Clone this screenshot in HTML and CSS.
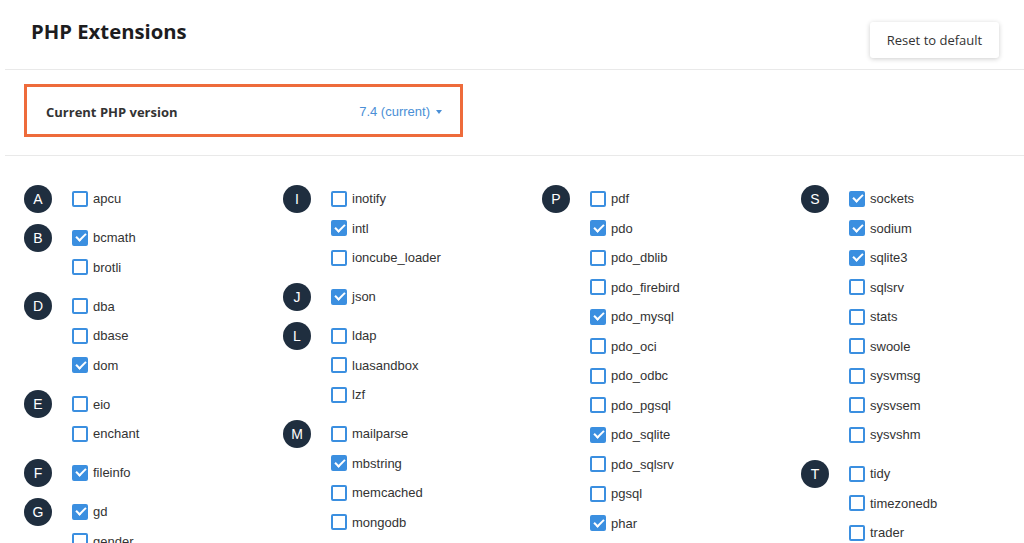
FILE: index.html
```html
<!DOCTYPE html>
<html>
<head>
    <link rel="stylesheet" href="styles.css">
</head>
<body>
<div class="page">
    <div class="header">
        <h1 class="title">PHP Extensions</h1>
        <button class="reset">Reset to default</button>
    </div>

    <div class="version-wrap">
        <div class="version-box">
            <span class="version-label">Current PHP version</span>
            <span class="version-select">7.4 (current) <span class="caret"></span></span>
        </div>
    </div>

    <div class="ext-grid">
        <div class="col">
            <div class="group"><span class="letter">A</span><ul>
                <li><span class="cb"></span>apcu</li>
            </ul></div>
            <div class="group"><span class="letter">B</span><ul>
                <li><span class="cb on"></span>bcmath</li>
                <li><span class="cb"></span>brotli</li>
            </ul></div>
            <div class="group"><span class="letter">D</span><ul>
                <li><span class="cb"></span>dba</li>
                <li><span class="cb"></span>dbase</li>
                <li><span class="cb on"></span>dom</li>
            </ul></div>
            <div class="group"><span class="letter">E</span><ul>
                <li><span class="cb"></span>eio</li>
                <li><span class="cb"></span>enchant</li>
            </ul></div>
            <div class="group"><span class="letter">F</span><ul>
                <li><span class="cb on"></span>fileinfo</li>
            </ul></div>
            <div class="group"><span class="letter">G</span><ul>
                <li><span class="cb on"></span>gd</li>
                <li><span class="cb"></span>gender</li>
            </ul></div>
        </div>

        <div class="col">
            <div class="group"><span class="letter">I</span><ul>
                <li><span class="cb"></span>inotify</li>
                <li><span class="cb on"></span>intl</li>
                <li><span class="cb"></span>ioncube_loader</li>
            </ul></div>
            <div class="group"><span class="letter">J</span><ul>
                <li><span class="cb on"></span>json</li>
            </ul></div>
            <div class="group"><span class="letter">L</span><ul>
                <li><span class="cb"></span>ldap</li>
                <li><span class="cb"></span>luasandbox</li>
                <li><span class="cb"></span>lzf</li>
            </ul></div>
            <div class="group"><span class="letter">M</span><ul>
                <li><span class="cb"></span>mailparse</li>
                <li><span class="cb on"></span>mbstring</li>
                <li><span class="cb"></span>memcached</li>
                <li><span class="cb"></span>mongodb</li>
            </ul></div>
        </div>

        <div class="col">
            <div class="group"><span class="letter">P</span><ul>
                <li><span class="cb"></span>pdf</li>
                <li><span class="cb on"></span>pdo</li>
                <li><span class="cb"></span>pdo_dblib</li>
                <li><span class="cb"></span>pdo_firebird</li>
                <li><span class="cb on"></span>pdo_mysql</li>
                <li><span class="cb"></span>pdo_oci</li>
                <li><span class="cb"></span>pdo_odbc</li>
                <li><span class="cb"></span>pdo_pgsql</li>
                <li><span class="cb on"></span>pdo_sqlite</li>
                <li><span class="cb"></span>pdo_sqlsrv</li>
                <li><span class="cb"></span>pgsql</li>
                <li><span class="cb on"></span>phar</li>
            </ul></div>
        </div>

        <div class="col">
            <div class="group"><span class="letter">S</span><ul>
                <li><span class="cb on"></span>sockets</li>
                <li><span class="cb on"></span>sodium</li>
                <li><span class="cb on"></span>sqlite3</li>
                <li><span class="cb"></span>sqlsrv</li>
                <li><span class="cb"></span>stats</li>
                <li><span class="cb"></span>swoole</li>
                <li><span class="cb"></span>sysvmsg</li>
                <li><span class="cb"></span>sysvsem</li>
                <li><span class="cb"></span>sysvshm</li>
            </ul></div>
            <div class="group"><span class="letter">T</span><ul>
                <li><span class="cb"></span>tidy</li>
                <li><span class="cb"></span>timezonedb</li>
                <li><span class="cb"></span>trader</li>
            </ul></div>
        </div>
    </div>
</div>
</body>
</html>
```

FILE: styles.css
```css
body {
    margin: 0;
    background: #fff;
    font-family: "Liberation Sans", Arial, sans-serif;
    color: #333;
    overflow: hidden;
}
.page {
    margin-left: 5px;
}
.header {
    display: flex;
    justify-content: space-between;
    align-items: flex-start;
    height: 69px;
    border-bottom: 1px solid #e9e9e9;
    padding: 0 25px 0 26px;
}
.title {
    margin: 17px 0 0;
    font-family: "Open Sans", sans-serif;
    font-size: 20.3px;
    line-height: 28px;
    font-weight: 700;
    color: #1d1d1f;
}
.reset {
    margin-top: 22px;
    width: 129px;
    height: 36px;
    border: none;
    border-radius: 3px;
    background: #fff;
    box-shadow: 0 1px 5px rgba(0, 0, 0, 0.2);
    font-family: "Open Sans", sans-serif;
    font-size: 13px;
    color: #333;
    cursor: pointer;
}
.version-wrap {
    padding: 14px 0 18px 19px;
    border-bottom: 1px solid #e9e9e9;
}
.version-box {
    width: 439px;
    height: 53px;
    box-sizing: border-box;
    border: 3px solid #ee6b3b;
    display: flex;
    align-items: center;
    justify-content: space-between;
    padding: 2px 18px 0 19px;
}
.version-label {
    font-family: "Open Sans", sans-serif;
    font-weight: 700;
    font-size: 13px;
    color: #333;
}
.version-select {
    color: #4a8fd6;
    font-size: 13px;
    display: flex;
    align-items: center;
}
.caret {
    display: inline-block;
    margin-left: 6px;
    width: 0;
    height: 0;
    border-left: 3.5px solid transparent;
    border-right: 3.5px solid transparent;
    border-top: 4px solid #4a8fd6;
}
.ext-grid {
    display: grid;
    grid-template-columns: repeat(4, 259px);
    padding: 28px 0 0 19px;
}
.group {
    display: flex;
    align-items: flex-start;
    margin-bottom: 9.5px;
}
.letter {
    flex: none;
    width: 28px;
    height: 28px;
    margin-top: 0.75px;
    border-radius: 50%;
    background: #1f2e3f;
    color: #fff;
    font-size: 14px;
    line-height: 28px;
    text-align: center;
}
.group ul {
    list-style: none;
    margin: 0 0 0 20px;
    padding: 0;
}
.group li {
    height: 29.5px;
    display: flex;
    align-items: center;
    font-size: 13px;
    color: #333;
}
.cb {
    width: 16px;
    height: 16px;
    box-sizing: border-box;
    border: 2px solid #3b8fe0;
    border-radius: 2px;
    margin-right: 5px;
    background: #fff;
    position: relative;
}
.cb.on {
    background: #3b8fe0;
}
.cb.on:after {
    content: '';
    position: absolute;
    left: 3.5px;
    top: -0.5px;
    width: 4px;
    height: 8px;
    border-right: 2px solid #fff;
    border-bottom: 2px solid #fff;
    transform: rotate(45deg);
}
```
